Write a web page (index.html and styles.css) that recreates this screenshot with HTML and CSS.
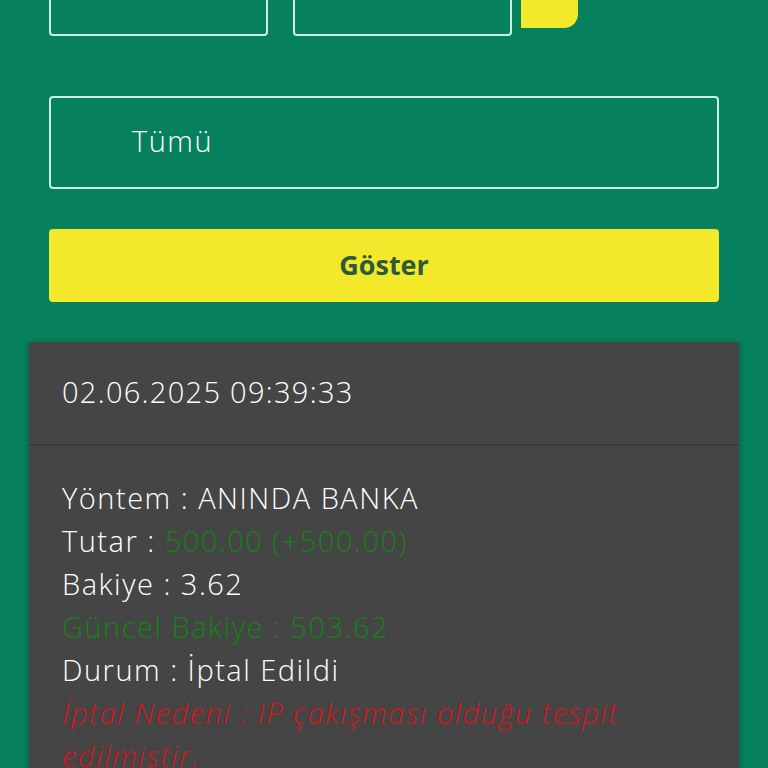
FILE: index.html
```html
<!DOCTYPE html>
<html lang="tr">
<head>
<meta charset="utf-8">
<title>Hesap Hareketleri</title>
<link rel="stylesheet" href="styles.css">
</head>
<body>
<div class="page">
  <div class="top-row">
    <div class="date-box"></div>
    <div class="date-box"></div>
    <div class="tab-yellow"></div>
  </div>
  <div class="select-box"><span class="select-text">Tümü</span></div>
  <button class="show-btn">Göster</button>
  <div class="card">
    <div class="card-head">02.06.2025 09:39:33</div>
    <div class="card-body">
      <div class="line">Yöntem : ANINDA BANKA</div>
      <div class="line">Tutar : <span class="green">500.00 (+500.00)</span></div>
      <div class="line">Bakiye : 3.62</div>
      <div class="line green">Güncel Bakiye : 503.62</div>
      <div class="line">Durum : İptal Edildi</div>
      <div class="line red">İptal Nedeni : IP çakışması olduğu tespit edilmiştir.</div>
    </div>
  </div>
</div>
</body>
</html>
```
FILE: styles.css
```css
html, body {
  margin: 0;
  padding: 0;
  background: #07815d;
  overflow: hidden;
}
body {
  font-family: "Open Sans", "Noto Sans", sans-serif;
  font-weight: 300;
  color: #ffffff;
}
.page {
  padding: 0 49px;
}
.top-row {
  display: flex;
  align-items: flex-end;
  margin-top: -40px;
  height: 76px;
}
.date-box {
  box-sizing: border-box;
  width: 219px;
  height: 76px;
  border: 2px solid #cdeee0;
  border-radius: 4px;
  margin-right: 25px;
}
.date-box + .date-box {
  margin-right: 9px;
}
.tab-yellow {
  align-self: flex-start;
  width: 57px;
  height: 68px;
  background: #f3e92a;
  border-radius: 0 0 14px 0;
}
.select-box {
  box-sizing: border-box;
  margin-top: 60px;
  height: 93px;
  border: 2px solid #cdeee0;
  border-radius: 4px;
  display: flex;
  align-items: center;
  padding: 0 0 4px 81px;
}
.select-text {
  font-size: 29px;
  letter-spacing: 1.5px;
  color: #ffffff;
}
.show-btn {
  display: block;
  width: 100%;
  margin-top: 40px;
  height: 73px;
  border: none;
  border-radius: 4px;
  background: #f3e92a;
  color: #2d5a3c;
  font-family: "Open Sans", "Noto Sans", sans-serif;
  font-weight: 700;
  font-size: 27px;
  padding: 0 0 2px;
}
.card {
  margin: 40px -20px 0;
  background: #454545;
  box-shadow: 0 2px 6px rgba(0, 0, 0, 0.35);
  border-radius: 2px;
}
.card-head {
  box-sizing: border-box;
  height: 104px;
  padding: 0 33px 4px;
  display: flex;
  align-items: center;
  font-size: 29px;
  letter-spacing: 1.3px;
  border-bottom: 2px solid #3b3b3b;
}
.card-body {
  padding: 30px 33px 20px;
  font-size: 29px;
  line-height: 43px;
  letter-spacing: 1.5px;
}
.green {
  color: #138313;
}
.red {
  color: #d3141c;
  font-style: italic;
}
```
